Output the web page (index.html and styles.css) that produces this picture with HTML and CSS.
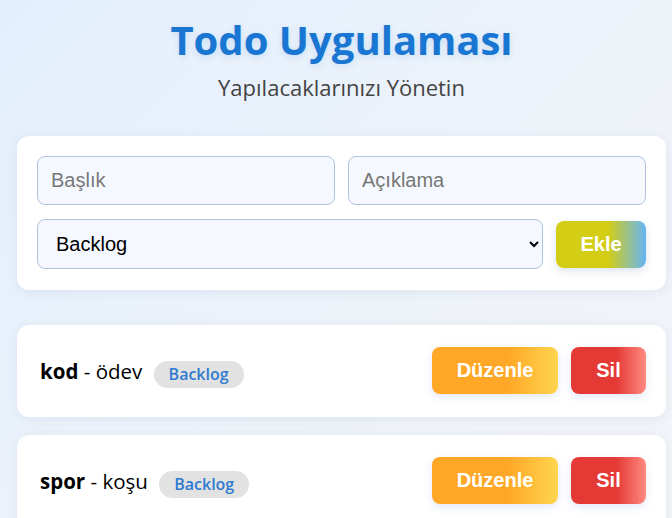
FILE: index.html
```html
<!DOCTYPE html>
<html lang="tr">
<head>
<meta charset="utf-8">
<title>Todo Uygulaması</title>
<link rel="stylesheet" href="styles.css">
</head>
<body>
<div class="app">
  <header class="header">
    <h1 class="title">Todo Uygulaması</h1>
    <p class="subtitle">Yapılacaklarınızı Yönetin</p>
  </header>
  <form class="form-card">
    <div class="row">
      <input class="field" type="text" placeholder="Başlık">
      <input class="field" type="text" placeholder="Açıklama">
    </div>
    <div class="row">
      <select class="field select">
        <option>Backlog</option>
        <option>In Progress</option>
        <option>Done</option>
      </select>
      <button type="button" class="btn btn-add">Ekle</button>
    </div>
  </form>
  <ul class="list">
    <li class="todo">
      <div class="todo-text"><strong>kod</strong> - ödev <span class="badge">Backlog</span></div>
      <div class="actions">
        <button type="button" class="btn btn-edit">Düzenle</button>
        <button type="button" class="btn btn-del">Sil</button>
      </div>
    </li>
    <li class="todo">
      <div class="todo-text"><strong>spor</strong> - koşu <span class="badge">Backlog</span></div>
      <div class="actions">
        <button type="button" class="btn btn-edit">Düzenle</button>
        <button type="button" class="btn btn-del">Sil</button>
      </div>
    </li>
  </ul>
</div>
</body>
</html>
```
FILE: styles.css
```css
html, body {
  margin: 0;
  padding: 0;
}
body {
  min-height: 100vh;
  background: linear-gradient(135deg, #e3effd 0%, #eef3f9 60%, #f2f4f8 100%);
  font-family: "Open Sans", "Noto Sans", sans-serif;
  overflow: hidden;
}
.app {
  width: 649px;
  margin-left: 17px;
  padding-top: 14px;
}
.header {
  text-align: center;
}
.title {
  margin: 0;
  font-size: 40px;
  line-height: 52px;
  font-weight: 700;
  color: #1976d2;
  text-shadow: 0 2px 6px rgba(25, 118, 210, 0.15);
}
.subtitle {
  margin: 6px 0 0;
  font-size: 22px;
  line-height: 30px;
  color: #444;
}
.form-card {
  margin-top: 34px;
  background: #fff;
  border-radius: 12px;
  padding: 20px 20px 21px;
  box-shadow: 0 2px 12px rgba(30, 60, 110, 0.07);
  display: flex;
  flex-direction: column;
  gap: 14px;
}
.row {
  display: flex;
  gap: 13px;
}
.field {
  flex: 1;
  min-width: 0;
  box-sizing: border-box;
  height: 49px;
  padding: 0 13px;
  font-family: "Liberation Sans", Arial, sans-serif;
  font-size: 20px;
  color: #000;
  background: #f5f9ff;
  border: 1px solid #b0c4df;
  border-radius: 8px;
  outline: none;
}
.field::placeholder {
  color: #777;
}
.select {
  height: 50px;
  padding-left: 14px;
}
.btn {
  border: none;
  border-radius: 8px;
  color: #fff;
  font-family: "Liberation Sans", Arial, sans-serif;
  font-size: 20px;
  font-weight: 700;
  line-height: 23px;
  padding: 12px 25px;
  cursor: pointer;
}
.btn-add {
  align-self: center;
  width: 90px;
  padding: 12px 0;
  background: linear-gradient(90deg, #d4cd16 0%, #d4cd16 58%, #64b5f6 100%);
  box-shadow: 0 3px 8px rgba(60, 100, 160, 0.18);
}
.list {
  list-style: none;
  margin: 35px 0 0;
  padding: 0;
  display: flex;
  flex-direction: column;
  gap: 18px;
}
.todo {
  background: #fff;
  border-radius: 12px;
  padding: 22px 20px 23px 23px;
  box-shadow: 0 2px 12px rgba(30, 60, 110, 0.07);
  display: flex;
  align-items: center;
  justify-content: space-between;
}
.todo-text {
  font-size: 20.5px;
  color: #000;
  padding-top: 4px;
}
.todo-text strong {
  font-weight: 700;
}
.badge {
  display: inline-block;
  margin-left: 6px;
  padding: 3px 15px 3px;
  border-radius: 14px;
  background: #e2e2e2;
  color: #2f7bd0;
  font-size: 16px;
  font-weight: 600;
  line-height: 21px;
  vertical-align: middle;
}
.actions {
  display: flex;
  gap: 13px;
}
.btn-edit {
  width: 126px;
  padding: 12px 0;
  background: linear-gradient(90deg, #ffa726 0%, #ffa726 60%, #ffd54f 100%);
  box-shadow: 0 3px 8px rgba(60, 100, 200, 0.15);
}
.btn-del {
  width: 75px;
  padding: 12px 0;
  background: linear-gradient(90deg, #e53935 0%, #e53935 60%, #ff8a80 100%);
  box-shadow: 0 3px 8px rgba(60, 100, 200, 0.15);
}
```
